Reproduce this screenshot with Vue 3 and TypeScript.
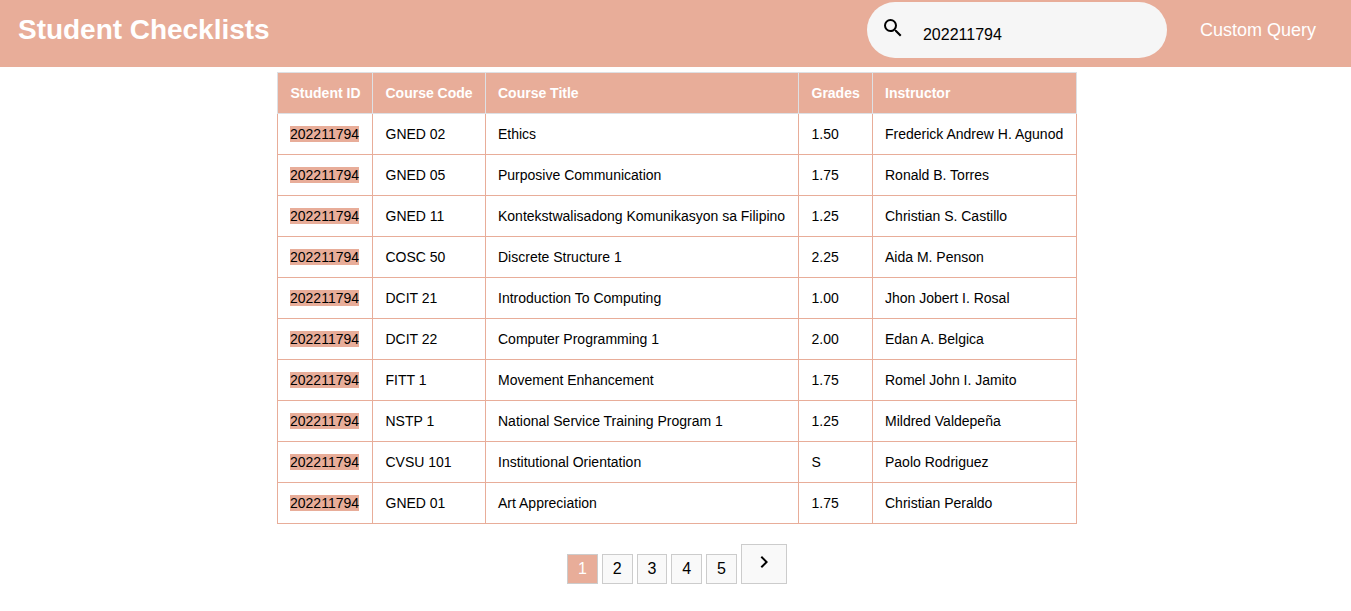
<script setup lang="ts">
import { ref } from 'vue'

interface Row {
  code: string
  title: string
  grade: string
  instructor: string
}

const query = ref<string>('202211794')
const page = ref<number>(1)
const headings: string[] = ['Student ID', 'Course Code', 'Course Title', 'Grades', 'Instructor']
const rows: Row[] = [
  { code: 'GNED 02', title: 'Ethics', grade: '1.50', instructor: 'Frederick Andrew H. Agunod' },
  { code: 'GNED 05', title: 'Purposive Communication', grade: '1.75', instructor: 'Ronald B. Torres' },
  { code: 'GNED 11', title: 'Kontekstwalisadong Komunikasyon sa Filipino', grade: '1.25', instructor: 'Christian S. Castillo' },
  { code: 'COSC 50', title: 'Discrete Structure 1', grade: '2.25', instructor: 'Aida M. Penson' },
  { code: 'DCIT 21', title: 'Introduction To Computing', grade: '1.00', instructor: 'Jhon Jobert I. Rosal' },
  { code: 'DCIT 22', title: 'Computer Programming 1', grade: '2.00', instructor: 'Edan A. Belgica' },
  { code: 'FITT 1', title: 'Movement Enhancement', grade: '1.75', instructor: 'Romel John I. Jamito' },
  { code: 'NSTP 1', title: 'National Service Training Program 1', grade: '1.25', instructor: 'Mildred Valdepeña' },
  { code: 'CVSU 101', title: 'Institutional Orientation', grade: 'S', instructor: 'Paolo Rodriguez' },
  { code: 'GNED 01', title: 'Art Appreciation', grade: '1.75', instructor: 'Christian Peraldo' },
]
</script>

<template>
  <div class="page">
    <header class="bar">
      <h1>Student Checklists</h1>
      <label class="search">
        <svg width="24" height="24" viewBox="0 0 24 24">
          <path d="M15.5 14h-.79l-.28-.27A6.471 6.471 0 0 0 16 9.5 6.5 6.5 0 1 0 9.5 16c1.61 0 3.09-.59 4.23-1.57l.27.28v.79l5 4.99L20.49 19l-4.99-5zm-6 0C7.01 14 5 11.99 5 9.5S7.01 5 9.5 5 14 7.01 14 9.5 11.99 14 9.5 14z" />
        </svg>
        <input v-model="query" type="text" />
      </label>
      <a class="custom">Custom Query</a>
    </header>

    <table>
      <colgroup>
        <col class="c-id" /><col class="c-code" /><col class="c-title" /><col class="c-grade" /><col class="c-inst" />
      </colgroup>
      <thead>
        <tr><th v-for="h in headings" :key="h">{{ h }}</th></tr>
      </thead>
      <tbody>
        <tr v-for="r in rows" :key="r.code">
          <td><span class="hit">202211794</span></td>
          <td>{{ r.code }}</td>
          <td>{{ r.title }}</td>
          <td>{{ r.grade }}</td>
          <td>{{ r.instructor }}</td>
        </tr>
      </tbody>
    </table>

    <nav class="pager">
      <button v-for="n in 5" :key="n" :class="{ active: n === page }" @click="page = n">{{ n }}</button>
      <button class="next" aria-label="Next" @click="page++">
        <svg width="24" height="24" viewBox="0 0 24 24">
          <path d="M10 6 8.59 7.41 13.17 12l-4.58 4.59L10 18l6-6z" />
        </svg>
      </button>
    </nav>
  </div>
</template>

<style>
body {
  margin: 0;
  background: #fff;
}
</style>

<style scoped>
.page {
  font-family: "Liberation Sans", Arial, sans-serif;
  color: #000;
}
.bar {
  box-sizing: border-box;
  height: 67px;
  padding: 2px 35px 0 18px;
  display: flex;
  align-items: flex-start;
  background: #e8ad99;
  color: #fff;
}
h1 {
  margin: 12px auto 0 0;
  font-size: 28px;
  line-height: 32px;
  font-weight: bold;
  letter-spacing: -0.03px;
}
.search {
  box-sizing: border-box;
  width: 300px;
  height: 56px;
  padding: 14px 13px 0 14px;
  display: flex;
  border-radius: 28px;
  background: #f6f6f6;
}
.search svg {
  flex: none;
  margin-right: 18px;
}
.search input {
  flex: 1;
  min-width: 0;
  height: 20px;
  margin: 9px 0 0;
  padding: 0;
  border: 0;
  outline: 0;
  background: transparent;
  color: #000;
  font: 16px "Liberation Sans", Arial, sans-serif;
}
.custom {
  margin: 17px 0 0 33px;
  font-size: 18px;
  line-height: 22px;
  white-space: nowrap;
}
table {
  width: 800px;
  margin: 5px 0 0 277px;
  table-layout: fixed;
  border-collapse: collapse;
  font-size: 14px;
  line-height: 16px;
}
.c-id { width: 95px; }
.c-code { width: 113px; }
.c-title { width: 313px; }
.c-grade { width: 74px; }
.c-inst { width: 204px; }
th,
td {
  padding: 12px;
  border: 1px solid #e8ad99;
  text-align: left;
  white-space: nowrap;
}
th:nth-child(2),
td:nth-child(2),
th:nth-child(4),
td:nth-child(4) {
  padding: 12px 11.5px 12px 12.5px;
}
th:first-child {
  padding: 12px 11.5px 12px 12.5px;
}
th {
  border-color: #dee0e4;
  background: #e8ad99;
  color: #fff;
}
.hit {
  background: #e8ad99;
}
.pager {
  display: flex;
  align-items: flex-end;
  gap: 3.9px;
  margin: 20px 0 0 567px;
}
.pager button {
  box-sizing: border-box;
  width: 30.9px;
  height: 30px;
  padding: 0;
  border: 1px solid #ccc;
  background: #f9f9f9;
  color: #000;
  font: 16px "Liberation Sans", Arial, sans-serif;
}
.pager button.active {
  background: #e8ad99;
  color: #fff;
}
.pager .next {
  width: 46px;
  height: 40px;
}
.next svg {
  display: block;
  margin: -4px auto 0;
}
</style>
